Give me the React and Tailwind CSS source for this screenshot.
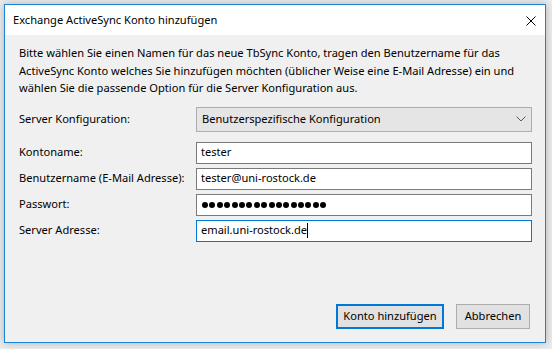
import React from 'react';

const font = { fontFamily: '"Noto Sans", "Open Sans", sans-serif' };

const Field = ({ label, children, focused = false }) => (
  <div className="flex items-center h-[22px]">
    <div className="w-[177px] shrink-0 whitespace-nowrap">{label}</div>
    <div
      className={`flex-1 h-full flex items-center pl-[4px] bg-white border ${
        focused ? 'border-[#0078d7]' : 'border-[#7a7a7a]'
      }`}
    >
      {children}
    </div>
  </div>
);

const Dots = ({ count }) => (
  <div className="flex items-center gap-[1.4px] pl-[1px]">
    {Array.from({ length: count }).map((_, i) => (
      <span key={i} className="w-[6px] h-[6px] rounded-full bg-black" />
    ))}
  </div>
);

export default function App() {
  return (
    <div className="w-[552px] h-[349px] bg-[#ececec] overflow-hidden pt-[4px] pl-[4px]">
      <div
        className="w-[542px] h-[339px] border border-[#1883d7] bg-[#f0f0f0] flex flex-col text-[11.1px] text-black shadow-[0_0_8px_rgba(0,0,0,0.25)]"
        style={font}
      >
        {/* title bar */}
        <div className="h-[30px] bg-white flex items-center justify-between pl-[8px] pr-[9px] shrink-0">
          <span>Exchange ActiveSync Konto hinzufügen</span>
          <svg width="10" height="10" viewBox="0 0 10 10" className="mt-[1px]">
            <path d="M0.5 0.5L9.5 9.5M9.5 0.5L0.5 9.5" stroke="#000" strokeWidth="1" fill="none" />
          </svg>
        </div>

        {/* body */}
        <div className="flex-1 flex flex-col pl-[14px] pr-[13px] pt-[9px] pb-[13px]">
          <p className="leading-[17.5px] whitespace-nowrap">
            Bitte wählen Sie einen Namen für das neue TbSync Konto, tragen den Benutzername für das
            <br />
            ActiveSync Konto welches Sie hinzufügen möchten (üblicher Weise eine E-Mail Adresse) ein und
            <br />
            wählen Sie die passende Option für die Server Konfiguration aus.
          </p>

          <div className="mt-[10px] flex flex-col gap-[4px]">
            <div className="flex items-center h-[25px] mb-[6px]">
              <div className="w-[177px] shrink-0">Server Konfiguration:</div>
              <div className="flex-1 h-full flex items-center justify-between pl-[5px] pr-[5px] bg-[#e5e5e5] border border-[#adadad]">
                <span>Benutzerspezifische Konfiguration</span>
                <svg width="10" height="6" viewBox="0 0 10 6">
                  <path d="M0.5 0.5L5 5L9.5 0.5" stroke="#5a5a5a" strokeWidth="1" fill="none" />
                </svg>
              </div>
            </div>
            <Field label="Kontoname:">tester</Field>
            <Field label="Benutzername (E-Mail Adresse):">tester@uni-rostock.de</Field>
            <Field label="Passwort:">
              <Dots count={17} />
            </Field>
            <Field label="Server Adresse:" focused>
              <span>email.uni-rostock.de</span>
              <span className="w-px h-[15px] bg-black" />
            </Field>
          </div>

          <div className="flex-1" />

          <div className="flex justify-end gap-[12px] mr-[2px]">
            <button className="w-[108px] h-[25px] border-2 border-[#0078d7] bg-[#e1e1e1] flex items-center justify-center">
              Konto hinzufügen
            </button>
            <button className="w-[74px] h-[25px] border border-[#adadad] bg-[#e1e1e1] flex items-center justify-center">
              Abbrechen
            </button>
          </div>
        </div>
      </div>
    </div>
  );
}
